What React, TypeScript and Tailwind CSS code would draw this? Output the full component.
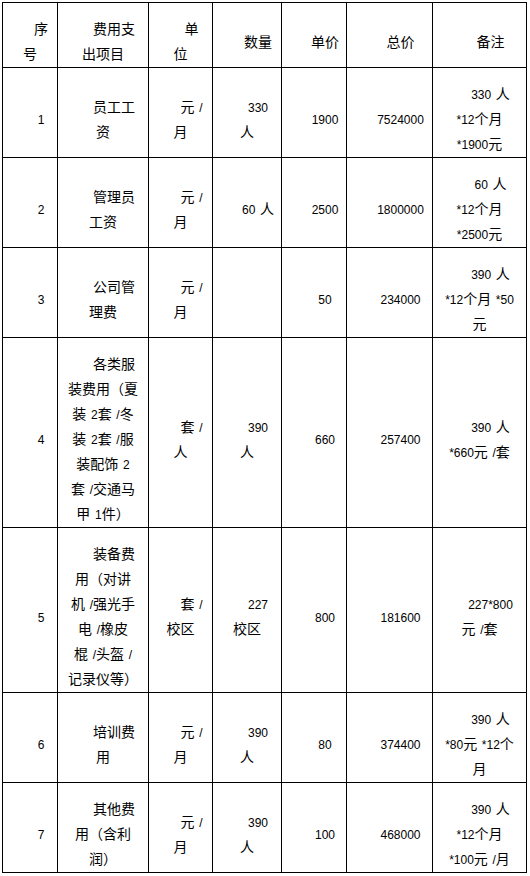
import React from 'react';

type Row = string[][];

const header: Row = [
    ["序", "号"],
    ["费用支", "出项目"],
    ["单", "位"],
    ["数量"],
    ["单价"],
    ["总价"],
    ["备注"],
];

const rows: Row[] = [
    [["1"], ["员工工", "资"], ["元 /", "月"], ["330", "人"], ["1900"], ["7524000"], ["330 人", "*12个月", "*1900元"]],
    [["2"], ["管理员", "工资"], ["元 /", "月"], ["60 人"], ["2500"], ["1800000"], ["60 人", "*12个月", "*2500元"]],
    [["3"], ["公司管", "理费"], ["元 /", "月"], [], ["50"], ["234000"], ["390 人", "*12个月 *50", "元"]],
    [
        ["4"],
        ["各类服", "装费用（夏", "装 2套 /冬", "装 2套 /服", "装配饰 2", "套 /交通马", "甲 1件）"],
        ["套 /", "人"],
        ["390", "人"],
        ["660"],
        ["257400"],
        ["390 人", "*660元 /套"],
    ],
    [
        ["5"],
        ["装备费", "用（对讲", "机 /强光手", "电 /橡皮", "棍 /头盔 /", "记录仪等）"],
        ["套 /", "校区"],
        ["227", "校区"],
        ["800"],
        ["181600"],
        ["227*800", "元 /套"],
    ],
    [["6"], ["培训费", "用"], ["元 /", "月"], ["390", "人"], ["80"], ["374400"], ["390 人", "*80元 *12个", "月"]],
    [["7"], ["其他费", "用（含利", "润）"], ["元 /", "月"], ["390", "人"], ["100"], ["468000"], ["390 人", "*12个月", "*100元 /月"]],
];

// 数字和符号用小一号的西文字体, 汉字走 CJK 字体; 空格稍微放宽
function Mixed({text}: {text: string}) {
    const parts = text.split(/([0-9*\/]+)/);
    return (
        <>
            {parts.map((p, i) =>
                /^[0-9*\/]+$/.test(p)
                    ? <span key={i} className="text-[12px] leading-none">{p}</span>
                    : <span key={i} className="leading-none">{p.replace(/ /g, "\u2004")}</span>
            )}
        </>
    );
}

function Cell({lines}: {lines: string[]}) {
    return (
        <td className="border border-black align-middle pt-[14px] pb-0 px-0 text-center">
            {lines.map((line, i) => (
                <div key={i} className={i === 0 ? "h-[25px] leading-[25px] pl-[22px] whitespace-pre" : "h-[25px] leading-[25px] whitespace-pre"}>
                    <Mixed text={line}/>
                </div>
            ))}
        </td>
    );
}

export default function App() {
    return (
        <div className="bg-white min-h-[876px] w-[530px] pt-[2px] pl-[2px] font-['Liberation_Sans','Noto_Sans_CJK_SC',sans-serif] text-[14px] text-black">
            <table className="table-fixed border-collapse w-[525px]">
                <colgroup>
                    <col className="w-[55px]"/>
                    <col className="w-[91px]"/>
                    <col className="w-[64px]"/>
                    <col className="w-[69px]"/>
                    <col className="w-[65px]"/>
                    <col className="w-[86px]"/>
                    <col className="w-[94px]"/>
                </colgroup>
                <tbody>
                    <tr>
                        {header.map((lines, i) => <Cell key={i} lines={lines}/>)}
                    </tr>
                    {rows.map((row, r) => (
                        <tr key={r}>
                            {row.map((lines, i) => <Cell key={i} lines={lines}/>)}
                        </tr>
                    ))}
                </tbody>
            </table>
        </div>
    );
}
